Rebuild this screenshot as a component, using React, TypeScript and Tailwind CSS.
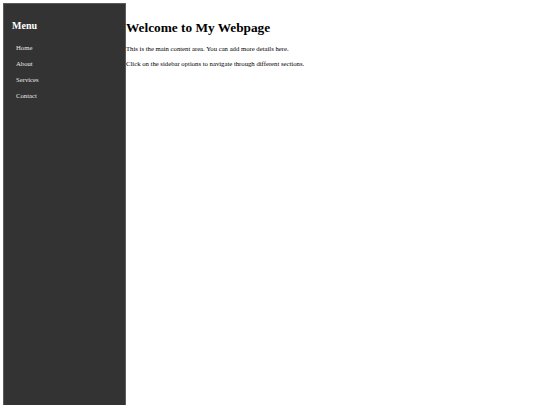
export default function App() {
  const items = ['Home', 'About', 'Services', 'Contact'];
  return (
    <div className="flex h-[405px] overflow-hidden bg-white pl-[3px] pt-[3px] font-['Liberation_Serif','Times_New_Roman',serif]">
      <aside className="h-[410px] w-[123px] shrink-0 border border-[#5c5c5c] bg-[#333333] px-[8px] pt-[16px] text-white">
        <h2 className="text-[10px] font-bold leading-[11.5px]">Menu</h2>
        <ul className="mt-[8.4px]">
          {items.map((item) => (
            <li key={item} className="py-[4.1px] pl-[4px] text-[6.7px] leading-[7.7px] text-[#e8e8e8]">
              {item}
            </li>
          ))}
        </ul>
      </aside>
      <main className="pt-[17px] text-black">
        <h1 className="text-[13.3px] font-bold leading-[15.3px]">Welcome to My Webpage</h1>
        <p className="mt-[9.6px] text-[6.7px] leading-[7.7px]">
          This is the main content area. You can add more details here.
        </p>
        <p className="mt-[7.6px] text-[6.7px] leading-[7.7px]">
          Click on the sidebar options to navigate through different sections.
        </p>
      </main>
    </div>
  );
}
